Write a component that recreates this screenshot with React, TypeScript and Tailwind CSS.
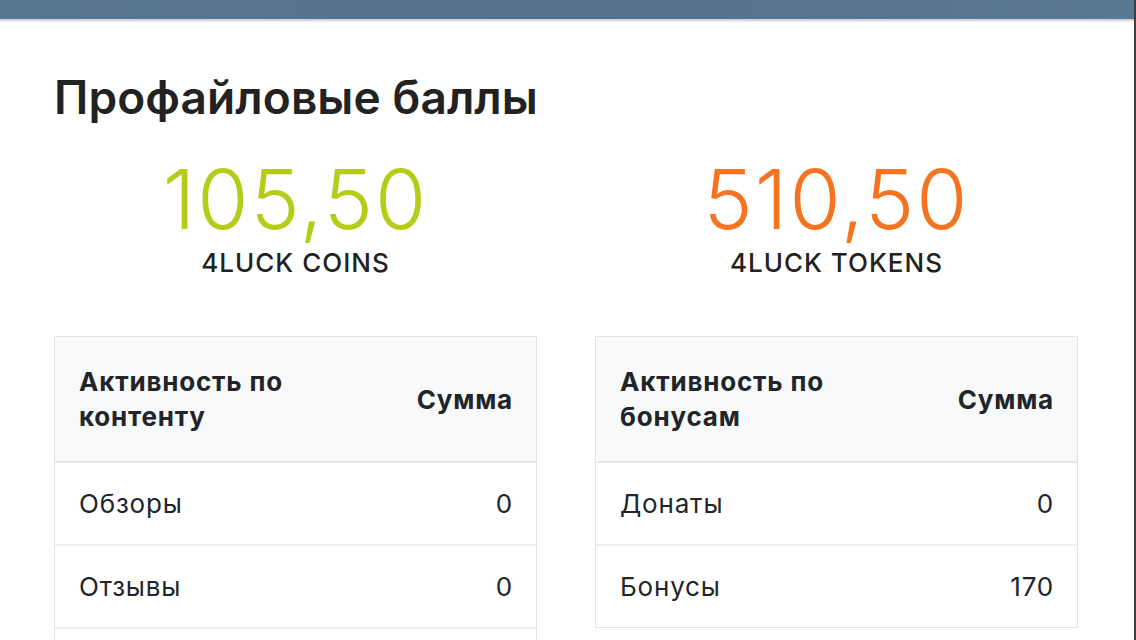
import React from 'react'

type Row = { label: string, value: string }

type TableProps = {
  title: string[],
  rows: Row[]
}

const ActivityTable = ({ title, rows }: TableProps) => {
  return (
    <div className="border border-[#e3e3e3]">
      <div className="flex items-center justify-between bg-[#f8f9fa] pl-6 pr-[23px] py-[27px] border-b-2 border-[#e6e6e6] font-bold">
        <div className="leading-[35px]">
          {title.map((t, i) => <div key={i}>{t}</div>)}
        </div>
        <div className="leading-[35px]">Сумма</div>
      </div>
      {rows.map((row, index) => (
        <div
          key={index}
          className={"flex items-center justify-between pl-6 pr-[23px] py-[23px] leading-[35px] " + (index < rows.length - 1 ? 'border-b-2 border-[#eeeeee]' : '')}
        >
          <div>{row.label}</div>
          <div>{row.value}</div>
        </div>
      ))}
    </div>
  )
}

const Balance = ({ value, label, color }: { value: string, label: string, color: string }) => {
  return (
    <div className="flex flex-col items-center">
      <div className={"text-[83px] leading-none font-light tracking-[2px] " + color}>{value}</div>
      <div className="mt-[9px] text-[26px] leading-none font-medium tracking-[1px] text-[#222]">{label}</div>
    </div>
  )
}

const App = () => {
  return (
    <div className="min-h-screen bg-white text-[#212529] flex" style={{ fontFamily: 'Inter, "Noto Sans", sans-serif' }}>
      <div className="flex-1 flex flex-col">
        <div className="h-[19px] bg-gradient-to-r from-[#587592] via-[#55718d] to-[#5a7794]"></div>
        <div className="h-[3px] bg-gradient-to-b from-[#c5cbd1] to-[#f1f1f1]"></div>
        <div className="pl-[54px] pr-[56px]">
          <h1 className="mt-[48px] text-[46px] leading-[54px] font-semibold text-[#222] tracking-[0.1px]">Профайловые баллы</h1>
          <div className="grid grid-cols-2 gap-[58px] mt-[34px]">
            <Balance value="105,50" label="4LUCK COINS" color="text-[#b5cc18]" />
            <Balance value="510,50" label="4LUCK TOKENS" color="text-[#f47421]" />
          </div>
          <div className="grid grid-cols-2 gap-[58px] mt-[60px] items-start text-[26px] tracking-[0.8px]">
            <ActivityTable
              title={['Активность по', 'контенту']}
              rows={[
                { label: 'Обзоры', value: '0' },
                { label: 'Отзывы', value: '0' },
                { label: 'Комментарии', value: '0' },
              ]}
            />
            <ActivityTable
              title={['Активность по', 'бонусам']}
              rows={[
                { label: 'Донаты', value: '0' },
                { label: 'Бонусы', value: '170' },
              ]}
            />
          </div>
        </div>
      </div>
      <div className="w-[2px] bg-[#3f3f3f]"></div>
    </div>
  )
}

export default App
